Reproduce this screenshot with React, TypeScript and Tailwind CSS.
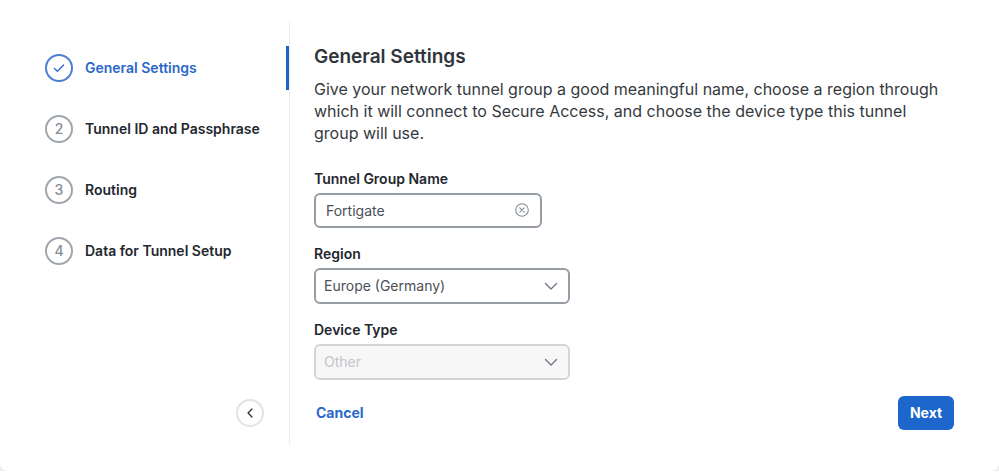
import { useState } from 'react';
import type { ReactNode } from 'react';

const steps = ['General Settings', 'Tunnel ID and Passphrase', 'Routing', 'Data for Tunnel Setup'];

function Chevron() {
  return (
    <svg
      className="pointer-events-none absolute top-3 right-3 h-3 w-3.5"
      viewBox="0 0 14 12"
      fill="none"
      stroke="#6f7680"
      strokeWidth="1.4"
      strokeLinecap="round"
      strokeLinejoin="round"
      aria-hidden="true"
    >
      <path d="M1.5 3.6 7 9l5.5-5.4" />
    </svg>
  );
}

function Field({ id, label, children }: { id: string; label: string; children: ReactNode }) {
  return (
    <div className="flex flex-col items-start gap-1">
      <label htmlFor={id} className="text-sm leading-5 font-semibold text-[#23282e]">
        {label}
      </label>
      {children}
    </div>
  );
}

export default function App() {
  const [name, setName] = useState('Fortigate');
  const [region, setRegion] = useState('Europe (Germany)');

  return (
    <div className="bg-[#ececec]">
      <div className='flex min-h-[calc(100vh-1px)] rounded-b-lg bg-white pt-[22px] pb-[26px] font-["Inter",sans-serif] text-[#23282e]'>
        <aside className="flex w-[290px] shrink-0 flex-col justify-between border-r border-[#ececef] pt-6 pb-[18px]">
          <ol className="flex flex-col gap-[17px]">
            {steps.map((step, i) => {
              const active = i === 0;
              return (
                <li
                  key={step}
                  aria-current={active ? 'step' : undefined}
                  className={`flex h-11 items-center gap-3 border-r-[3px] pl-[45px] text-sm font-semibold ${
                    active ? 'border-[#1d63c8] text-[#2a67c9]' : 'border-transparent'
                  }`}
                >
                  <span
                    className={`flex h-7 w-7 items-center justify-center rounded-full border-2 font-medium ${
                      active ? 'border-[#4a7fd2]' : 'border-[#a0a6ad] text-[#858c95]'
                    }`}
                  >
                    {active ? (
                      <svg className="h-3 w-3" viewBox="0 0 12 12" fill="none" stroke="currentColor" strokeWidth="1.3" strokeLinecap="round" strokeLinejoin="round" aria-hidden="true">
                        <path d="M1.4 6.4 4.4 9.2 10.6 3" />
                      </svg>
                    ) : (
                      i + 1
                    )}
                  </span>
                  {step}
                </li>
              );
            })}
          </ol>
          <button
            type="button"
            aria-label="Collapse"
            className="mr-[25px] flex h-7 w-7 items-center justify-center self-end rounded-full border-2 border-[#e1e3e6] bg-white"
          >
            <svg className="h-3 w-3" viewBox="0 0 12 12" fill="none" stroke="#23282e" strokeWidth="1.2" strokeLinecap="round" strokeLinejoin="round" aria-hidden="true">
              <path d="M8 2 4 6 8 10" />
            </svg>
          </button>
        </aside>

        <main className="flex grow flex-col pt-[23px] pr-[45px] pl-6">
          <h1 className="text-[19px] leading-6 font-semibold text-[#2f353b]">General Settings</h1>
          <p className="mt-[9px] max-w-[640px] text-base leading-[22px] text-[#343a40]">
            Give your network tunnel group a good meaningful name, choose a region through which it will connect to
            Secure Access, and choose the device type this tunnel group will use.
          </p>

          <form className="mt-[25px] flex flex-col gap-4" onSubmit={(e) => e.preventDefault()}>
            <Field id="name" label="Tunnel Group Name">
              <div className="relative w-[228px]">
                <input
                  id="name"
                  type="text"
                  value={name}
                  onChange={(e) => setName(e.target.value)}
                  className="h-[35px] w-full rounded-md border-2 border-[#979da5] bg-white pr-9 pl-2.5 text-sm text-[#4a5057]"
                />
                <button
                  type="button"
                  aria-label="Clear"
                  onClick={() => setName('')}
                  className="absolute top-2.5 right-[13px] h-3.5 w-3.5"
                >
                  <svg className="h-3.5 w-3.5" viewBox="0 0 14 14" fill="none" stroke="#858c95" strokeLinecap="round" aria-hidden="true">
                    <circle cx="7" cy="7" r="6.3" strokeWidth="1.1" />
                    <path d="m4.8 4.8 4.4 4.4M9.2 4.8 4.8 9.2" strokeWidth="1.1" />
                  </svg>
                </button>
              </div>
            </Field>

            <Field id="region" label="Region">
              <div className="relative w-64">
                <select
                  id="region"
                  value={region}
                  onChange={(e) => setRegion(e.target.value)}
                  className="h-9 w-full appearance-none rounded-md border-2 border-[#979da5] bg-white pr-8 pl-2 text-sm text-[#4a5057]"
                >
                  <option>Europe (Germany)</option>
                </select>
                <Chevron />
              </div>
            </Field>

            <Field id="device" label="Device Type">
              <div className="relative w-64">
                <select
                  id="device"
                  disabled
                  className="h-9 w-full appearance-none rounded-md border-2 border-[#d3d6d9] bg-[#f7f7f7] pr-8 pl-2 text-sm text-[#c3c6ca] opacity-100"
                >
                  <option>Other</option>
                </select>
                <Chevron />
              </div>
            </Field>

            <div className="flex items-center justify-between text-sm font-bold">
              <button type="button" className="px-0.5 text-[#2a67c9]">
                Cancel
              </button>
              <button type="submit" className="h-[34px] w-14 rounded-md bg-[#1d66cc] text-white">
                Next
              </button>
            </div>
          </form>
        </main>
      </div>
    </div>
  );
}
